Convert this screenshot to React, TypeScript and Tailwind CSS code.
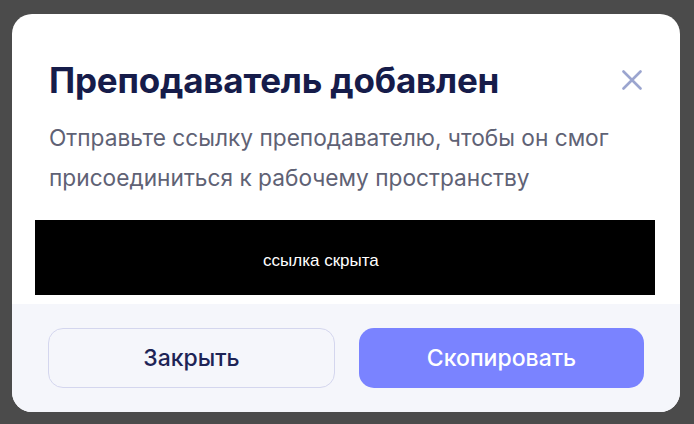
export default function App() {
  return (
    <div
      className="min-h-screen w-full bg-[#4b4b4b] pt-[14px] px-[12px]"
      style={{ fontFamily: 'Inter, "Noto Sans", sans-serif' }}
    >
      <div className="w-[668px] h-[398px] bg-white rounded-[20px] overflow-hidden flex flex-col">
        <div className="px-[37px] pt-[46px]">
          <div className="flex items-center justify-between h-[40px]">
            <h1 className="text-[35px] leading-[40px] font-bold text-[#161c4a] tracking-[-0.2px]">
              Преподаватель добавлен
            </h1>
            <button className="mr-[1px] text-[#9ba5cf]">
              <svg width="20" height="20" viewBox="0 0 20 20" fill="none">
                <path d="M1.5 1.5L18.5 18.5M18.5 1.5L1.5 18.5" stroke="currentColor" strokeWidth="2.6" strokeLinecap="round" />
              </svg>
            </button>
          </div>
          <p className="mt-[18px] text-[22.7px] leading-[40px] text-[#5f6275] whitespace-nowrap">
            Отправьте ссылку преподавателю, чтобы он смог
            <br />
            присоединиться к рабочему пространству
          </p>
        </div>
        <div className="mt-[22px] ml-[23px] w-[620px] h-[75px] shrink-0 bg-black flex items-center pl-[228px] pt-[6px]">
          <span
            className="text-white text-[17px]"
            style={{ fontFamily: '"Liberation Sans", Arial, sans-serif' }}
          >
            ссылка скрыта
          </span>
        </div>
        <div className="mt-[9px] flex-1 bg-[#f5f6fb] px-[36px] py-[24px] flex gap-[24px]">
          <button className="flex-1 h-[60px] rounded-[15px] border border-[#d4d6ee] bg-[#f5f6fb] text-[23px] font-medium text-[#1e2456]">
            Закрыть
          </button>
          <button className="flex-1 h-[60px] rounded-[15px] bg-[#7a83ff] text-[23px] font-medium text-white">
            Скопировать
          </button>
        </div>
      </div>
    </div>
  );
}
